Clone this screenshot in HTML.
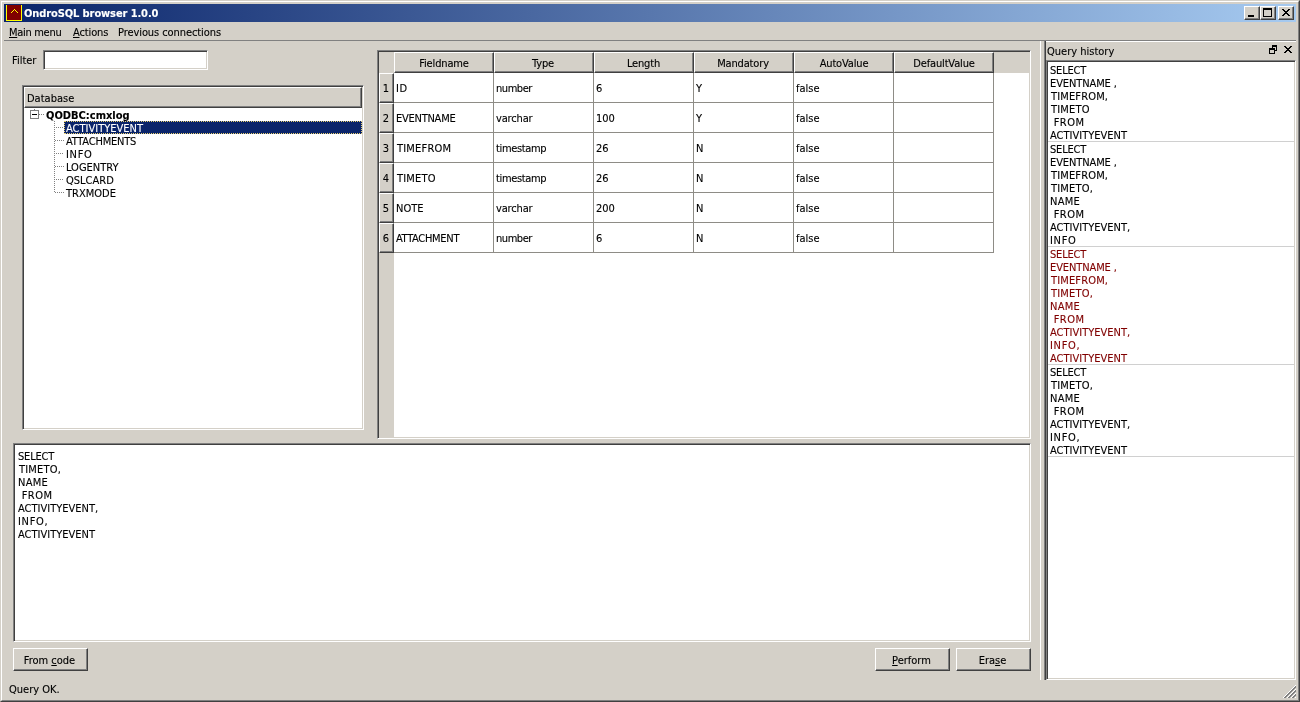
<!DOCTYPE html>
<html><head><meta charset="utf-8"><title>OndroSQL browser 1.0.0</title>
<style>
*{box-sizing:border-box;margin:0;padding:0}
html,body{width:1300px;height:702px;overflow:hidden;background:#d4d0c8}
body{position:relative;font-family:"DejaVu Sans Condensed","DejaVu Sans","Liberation Sans",sans-serif;font-stretch:condensed;font-size:11px;line-height:13px;color:#000;white-space:pre;-webkit-text-stroke:.12px}
#w{position:absolute;left:0;top:0;width:1300px;height:702px;will-change:transform}
.a{position:absolute}
.sunken{border:1px solid;border-color:#808080 #fff #fff #808080;box-shadow:inset 1px 1px 0 #404040,inset -1px -1px 0 #d4d0c8;background:#fff}
.raised{border:1px solid;border-color:#fff #404040 #404040 #fff;box-shadow:inset -1px -1px 0 #808080;background:#d4d0c8}
.t{position:absolute;height:13px;line-height:13px;margin:1px 0 0 -1px}
u{text-decoration:underline;text-decoration-thickness:1px;text-underline-offset:1px}
.hd{text-align:center;line-height:13px;padding-top:4px;letter-spacing:-.15px}
.rh{text-align:center;line-height:13px;padding-top:8px;padding-right:1px}
.btn{text-align:center;line-height:13px;padding-top:5px;padding-right:2px}
.li{line-height:13px;margin:1px 0 0 -1px}
#ta{margin:1px 0 0 -1px}
</style></head><body><div id="w">
<!-- window frame -->
<div class="a" style="left:0;top:0;width:1300px;height:702px;border:1px solid;border-color:#d4d0c8 #404040 #404040 #d4d0c8"></div>
<div class="a" style="left:1px;top:1px;width:1298px;height:700px;border:1px solid;border-color:#fff #808080 #808080 #fff"></div>
<!-- title bar -->
<div class="a" id="title" style="left:4px;top:4px;width:1292px;height:18px;background:linear-gradient(90deg,#0a246a,#a6caf0)"></div>
<svg class="a" style="left:6px;top:5px" width="16" height="16" viewBox="0 0 16 16" shape-rendering="crispEdges"><rect width="16" height="16" fill="#ffff00"/><rect x="1" y="0" width="14" height="15" fill="#800000"/><path fill="#ffff00" d="M8 4h1v1h-1zM7 5h1v1h-1zM9 5h1v1h-1zM6 6h1v1h-1zM10 6h1v1h-1zM5 7h1v1h-1zM11 7h1v1h-1z"/></svg>
<div class="t" id="ttl" style="left:25px;top:6px;color:#fff;font-weight:bold;letter-spacing:-.1px">OndroSQL browser 1.0.0</div>
<div class="a raised" style="left:1244px;top:6px;width:16px;height:14px"></div>
<div class="a raised" style="left:1260px;top:6px;width:16px;height:14px"></div>
<div class="a raised" style="left:1278px;top:6px;width:16px;height:14px"></div>
<svg class="a" style="left:1244px;top:6px" width="50" height="14" viewBox="0 0 50 14" shape-rendering="crispEdges"><rect x="4" y="9" width="6" height="2"/><rect x="19" y="2" width="9" height="2"/><rect x="19.5" y="2.5" width="8" height="8" fill="none" stroke="#000"/><path d="M38 3h2v1h-2zM44 3h2v1h-2zM39 4h2v1h-2zM43 4h2v1h-2zM40 5h4v1h-4zM41 6h2v1h-2zM40 7h4v1h-4zM39 8h2v1h-2zM43 8h2v1h-2zM38 9h2v1h-2zM44 9h2v1h-2z"/></svg>
<!-- menu bar -->
<div class="t" id="m1" style="left:10px;top:25px;letter-spacing:-.3px"><u>M</u>ain menu</div>
<div class="t" id="m2" style="left:74px;top:25px;letter-spacing:-.12px"><u>A</u>ctions</div>
<div class="t" id="m3" style="left:119px;top:25px;letter-spacing:-.08px">Previous connections</div>
<div class="a" style="left:4px;top:40px;width:1292px;height:1px;background:#808080"></div>
<!-- filter -->
<div class="t" id="flt" style="left:13px;top:53px">Filter</div>
<div class="a sunken" style="left:43px;top:50px;width:165px;height:20px"></div>
<!-- tree -->
<div class="a sunken" style="left:22px;top:85px;width:342px;height:345px"></div>
<div class="a raised" style="left:24px;top:87px;width:338px;height:21px"></div>
<div class="t" id="dbh" style="left:28px;top:91px">Database</div>
<svg class="a" style="left:25px;top:107px" width="60" height="92" viewBox="0 0 60 92" shape-rendering="crispEdges"><path fill="#808080" d="M9 2h1v1h-1zM14 7h1v1h-1zM16 7h1v1h-1zM18 7h1v1h-1zM29 14h1v1h-1zM29 16h1v1h-1zM29 18h1v1h-1zM29 20h1v1h-1zM29 22h1v1h-1zM29 24h1v1h-1zM29 26h1v1h-1zM29 28h1v1h-1zM29 30h1v1h-1zM29 32h1v1h-1zM29 34h1v1h-1zM29 36h1v1h-1zM29 38h1v1h-1zM29 40h1v1h-1zM29 42h1v1h-1zM29 44h1v1h-1zM29 46h1v1h-1zM29 48h1v1h-1zM29 50h1v1h-1zM29 52h1v1h-1zM29 54h1v1h-1zM29 56h1v1h-1zM29 58h1v1h-1zM29 60h1v1h-1zM29 62h1v1h-1zM29 64h1v1h-1zM29 66h1v1h-1zM29 68h1v1h-1zM29 70h1v1h-1zM29 72h1v1h-1zM29 74h1v1h-1zM29 76h1v1h-1zM29 78h1v1h-1zM29 80h1v1h-1zM29 82h1v1h-1zM29 84h1v1h-1zM31 20h1v1h-1zM33 20h1v1h-1zM35 20h1v1h-1zM37 20h1v1h-1zM30 33h1v1h-1zM32 33h1v1h-1zM34 33h1v1h-1zM36 33h1v1h-1zM38 33h1v1h-1zM31 46h1v1h-1zM33 46h1v1h-1zM35 46h1v1h-1zM37 46h1v1h-1zM30 59h1v1h-1zM32 59h1v1h-1zM34 59h1v1h-1zM36 59h1v1h-1zM38 59h1v1h-1zM31 72h1v1h-1zM33 72h1v1h-1zM35 72h1v1h-1zM37 72h1v1h-1zM30 85h1v1h-1zM32 85h1v1h-1zM34 85h1v1h-1zM36 85h1v1h-1zM38 85h1v1h-1z"/><rect x="5.5" y="3.5" width="8" height="8" fill="#fff" stroke="#808080"/><rect x="7" y="7" width="5" height="1" fill="#000"/></svg>
<div class="t" id="root" style="left:47px;top:108px;font-weight:bold">QODBC:cmxlog</div>
<div class="a" style="left:64px;top:121px;width:298px;height:13px;background:#0a246a;outline:1px dotted #e8d070;outline-offset:-1px"></div>
<div class="t" style="left:67px;top:121px;color:#fff">ACTIVITYEVENT</div>
<div class="t" style="left:67px;top:134px"><span style="letter-spacing:-0.2px;">ATTACHMENTS</span></div>
<div class="t" style="left:67px;top:147px"><span style="letter-spacing:0.7px;">INFO</span></div>
<div class="t" style="left:67px;top:160px">LOGENTRY</div>
<div class="t" style="left:67px;top:173px">QSLCARD</div>
<div class="t" style="left:67px;top:186px">TRXMODE</div>
<!-- table -->
<div class="a sunken" style="left:377px;top:50px;width:654px;height:389px"></div>
<div class="a" style="left:379px;top:52px;width:650px;height:21px;background:#d4d0c8"></div>
<div class="a" style="left:379px;top:52px;width:15px;height:385px;background:#d4d0c8"></div>
<div class="a raised hd" style="left:394px;top:52px;width:100px;height:21px">Fieldname</div>
<div class="a raised hd" style="left:494px;top:52px;width:100px;height:21px;padding-right:2px">Type</div>
<div class="a raised hd" style="left:594px;top:52px;width:100px;height:21px;padding-right:1px">Length</div>
<div class="a raised hd" style="left:694px;top:52px;width:100px;height:21px;padding-right:2px">Mandatory</div>
<div class="a raised hd" style="left:794px;top:52px;width:100px;height:21px">AutoValue</div>
<div class="a raised hd" style="left:894px;top:52px;width:100px;height:21px">DefaultValue</div>
<div class="a" id="grid" style="left:394px;top:73px;width:600px;height:180px;background-image:linear-gradient(90deg,transparent 99px,#8e8c86 99px),linear-gradient(180deg,transparent 29px,#8e8c86 29px);background-size:100px 30px"></div>
<div class="a raised rh" style="left:379px;top:73px;width:15px;height:30px">1</div>
<div class="t" style="left:397px;top:81px"><span style="letter-spacing:0.5px;">ID</span></div>
<div class="t" style="left:497px;top:81px"><span style="letter-spacing:-0.45px;">number</span></div>
<div class="t" style="left:597px;top:81px">6</div>
<div class="t" style="left:697px;top:81px">Y</div>
<div class="t" style="left:797px;top:81px">false</div>
<div class="a raised rh" style="left:379px;top:103px;width:15px;height:30px">2</div>
<div class="t" style="left:397px;top:111px"><span style="letter-spacing:-0.25px;">EVENTNAME</span></div>
<div class="t" style="left:497px;top:111px"><span style="letter-spacing:-0.15px;">varchar</span></div>
<div class="t" style="left:597px;top:111px">100</div>
<div class="t" style="left:697px;top:111px">Y</div>
<div class="t" style="left:797px;top:111px">false</div>
<div class="a raised rh" style="left:379px;top:133px;width:15px;height:30px">3</div>
<div class="t" style="left:397px;top:141px"><span style="margin-left:1px;letter-spacing:0.2px;">TIMEFROM</span></div>
<div class="t" style="left:497px;top:141px"><span style="letter-spacing:-0.35px;">timestamp</span></div>
<div class="t" style="left:597px;top:141px">26</div>
<div class="t" style="left:697px;top:141px">N</div>
<div class="t" style="left:797px;top:141px">false</div>
<div class="a raised rh" style="left:379px;top:163px;width:15px;height:30px">4</div>
<div class="t" style="left:397px;top:171px"><span style="margin-left:1px;letter-spacing:0.2px;">TIMETO</span></div>
<div class="t" style="left:497px;top:171px"><span style="letter-spacing:-0.35px;">timestamp</span></div>
<div class="t" style="left:597px;top:171px">26</div>
<div class="t" style="left:697px;top:171px">N</div>
<div class="t" style="left:797px;top:171px">false</div>
<div class="a raised rh" style="left:379px;top:193px;width:15px;height:30px">5</div>
<div class="t" style="left:397px;top:201px">NOTE</div>
<div class="t" style="left:497px;top:201px"><span style="letter-spacing:-0.15px;">varchar</span></div>
<div class="t" style="left:597px;top:201px">200</div>
<div class="t" style="left:697px;top:201px">N</div>
<div class="t" style="left:797px;top:201px">false</div>
<div class="a raised rh" style="left:379px;top:223px;width:15px;height:30px">6</div>
<div class="t" style="left:397px;top:231px"><span style="letter-spacing:-0.3px;">ATTACHMENT</span></div>
<div class="t" style="left:497px;top:231px"><span style="letter-spacing:-0.45px;">number</span></div>
<div class="t" style="left:597px;top:231px">6</div>
<div class="t" style="left:697px;top:231px">N</div>
<div class="t" style="left:797px;top:231px">false</div>
<!-- editor -->
<div class="a sunken" style="left:13px;top:443px;width:1018px;height:199px"></div>
<div class="a" id="ta" style="left:19px;top:449px;line-height:13px"><span style="letter-spacing:-0.2px;">SELECT</span>
<span style="margin-left:1px;letter-spacing:0.2px;">TIMETO,</span>
<span style="letter-spacing:0.3px;">NAME</span>
<span style="letter-spacing:0.5px;"> FROM</span>
ACTIVITYEVENT,
<span style="letter-spacing:0.7px;">INFO,</span>
ACTIVITYEVENT</div>
<!-- buttons / status -->
<div class="a raised btn" style="left:13px;top:648px;width:75px;height:23px">From <u>c</u>ode</div>
<div class="a raised btn" style="left:875px;top:648px;width:75px;height:23px"><u>P</u>erform</div>
<div class="a raised btn" style="left:956px;top:648px;width:75px;height:23px">Era<u>s</u>e</div>
<div class="t" id="st" style="left:10px;top:682px">Query OK.</div>
<svg class="a" style="left:1283px;top:685px" width="13" height="13" viewBox="0 0 13 13" shape-rendering="crispEdges"><path fill="#fff" d="M0 12h1v1h-1zM1 11h1v1h-1zM2 10h1v1h-1zM3 9h1v1h-1zM4 8h1v1h-1zM5 7h1v1h-1zM6 6h1v1h-1zM7 5h1v1h-1zM8 4h1v1h-1zM9 3h1v1h-1zM10 2h1v1h-1zM11 1h1v1h-1zM12 0h1v1h-1zM4 12h1v1h-1zM5 11h1v1h-1zM6 10h1v1h-1zM7 9h1v1h-1zM8 8h1v1h-1zM9 7h1v1h-1zM10 6h1v1h-1zM11 5h1v1h-1zM12 4h1v1h-1zM8 12h1v1h-1zM9 11h1v1h-1zM10 10h1v1h-1zM11 9h1v1h-1zM12 8h1v1h-1zM12 12h1v1h-1z"/><path fill="#808080" d="M1 12h1v1h-1zM2 11h1v1h-1zM3 10h1v1h-1zM4 9h1v1h-1zM5 8h1v1h-1zM6 7h1v1h-1zM7 6h1v1h-1zM8 5h1v1h-1zM9 4h1v1h-1zM10 3h1v1h-1zM11 2h1v1h-1zM12 1h1v1h-1zM2 12h1v1h-1zM3 11h1v1h-1zM4 10h1v1h-1zM5 9h1v1h-1zM6 8h1v1h-1zM7 7h1v1h-1zM8 6h1v1h-1zM9 5h1v1h-1zM10 4h1v1h-1zM11 3h1v1h-1zM12 2h1v1h-1zM5 12h1v1h-1zM6 11h1v1h-1zM7 10h1v1h-1zM8 9h1v1h-1zM9 8h1v1h-1zM10 7h1v1h-1zM11 6h1v1h-1zM12 5h1v1h-1zM6 12h1v1h-1zM7 11h1v1h-1zM8 10h1v1h-1zM9 9h1v1h-1zM10 8h1v1h-1zM11 7h1v1h-1zM12 6h1v1h-1zM9 12h1v1h-1zM10 11h1v1h-1zM11 10h1v1h-1zM12 9h1v1h-1zM10 12h1v1h-1zM11 11h1v1h-1zM12 10h1v1h-1z"/></svg>
<!-- dock: query history -->
<div class="a" style="left:1040px;top:41px;width:1px;height:639px;background:#fff"></div>
<div class="a" style="left:1044px;top:41px;width:1px;height:639px;background:#808080"></div>
<div class="a" style="left:1045px;top:41px;width:1px;height:639px;background:#404040"></div>
<div class="a" style="left:1046px;top:41px;width:250px;height:1px;background:#fff"></div>
<div class="t" id="qh" style="left:1048px;top:44px">Query history</div>
<svg class="a" style="left:1269px;top:45px" width="24" height="9" viewBox="0 0 24 9" shape-rendering="crispEdges"><path d="M3 0 h5 v6 h-2 v-1 h1 v-3 h-3 v1 h-1 z M0 3 h6 v6 h-6 z M1 5 v3 h4 v-3 z" fill-rule="evenodd"/><path d="M15 1h2v1h-2zM21 1h2v1h-2zM16 2h2v1h-2zM20 2h2v1h-2zM17 3h4v1h-4zM18 4h2v1h-2zM17 5h4v1h-4zM16 6h2v1h-2zM20 6h2v1h-2zM15 7h2v1h-2zM21 7h2v1h-2z"/></svg>
<div class="a sunken" style="left:1046px;top:60px;width:250px;height:620px"></div>
<div class="a li" style="left:1051px;top:63px;color:#000"><span style="letter-spacing:-0.2px;">SELECT</span>
<span style="letter-spacing:-0.1px;">EVENTNAME ,</span>
<span style="margin-left:1px;letter-spacing:0.15px;">TIMEFROM,</span>
<span style="margin-left:1px;letter-spacing:0.2px;">TIMETO</span>
<span style="letter-spacing:0.5px;"> FROM</span>
ACTIVITYEVENT</div>
<div class="a" style="left:1048px;top:141px;width:246px;height:1px;background:#d0d0d0"></div>
<div class="a li" style="left:1051px;top:142px;color:#000"><span style="letter-spacing:-0.2px;">SELECT</span>
<span style="letter-spacing:-0.1px;">EVENTNAME ,</span>
<span style="margin-left:1px;letter-spacing:0.15px;">TIMEFROM,</span>
<span style="margin-left:1px;letter-spacing:0.2px;">TIMETO,</span>
<span style="letter-spacing:0.3px;">NAME</span>
<span style="letter-spacing:0.5px;"> FROM</span>
ACTIVITYEVENT,
<span style="letter-spacing:0.7px;">INFO</span></div>
<div class="a" style="left:1048px;top:246px;width:246px;height:1px;background:#d0d0d0"></div>
<div class="a li" style="left:1051px;top:247px;color:#800000"><span style="letter-spacing:-0.2px;">SELECT</span>
<span style="letter-spacing:-0.1px;">EVENTNAME ,</span>
<span style="margin-left:1px;letter-spacing:0.15px;">TIMEFROM,</span>
<span style="margin-left:1px;letter-spacing:0.2px;">TIMETO,</span>
<span style="letter-spacing:0.3px;">NAME</span>
<span style="letter-spacing:0.5px;"> FROM</span>
ACTIVITYEVENT,
<span style="letter-spacing:0.7px;">INFO,</span>
ACTIVITYEVENT</div>
<div class="a" style="left:1048px;top:364px;width:246px;height:1px;background:#d0d0d0"></div>
<div class="a li" style="left:1051px;top:365px;color:#000"><span style="letter-spacing:-0.2px;">SELECT</span>
<span style="margin-left:1px;letter-spacing:0.2px;">TIMETO,</span>
<span style="letter-spacing:0.3px;">NAME</span>
<span style="letter-spacing:0.5px;"> FROM</span>
ACTIVITYEVENT,
<span style="letter-spacing:0.7px;">INFO,</span>
ACTIVITYEVENT</div>
<div class="a" style="left:1048px;top:456px;width:246px;height:1px;background:#d0d0d0"></div>
</div></body></html>
